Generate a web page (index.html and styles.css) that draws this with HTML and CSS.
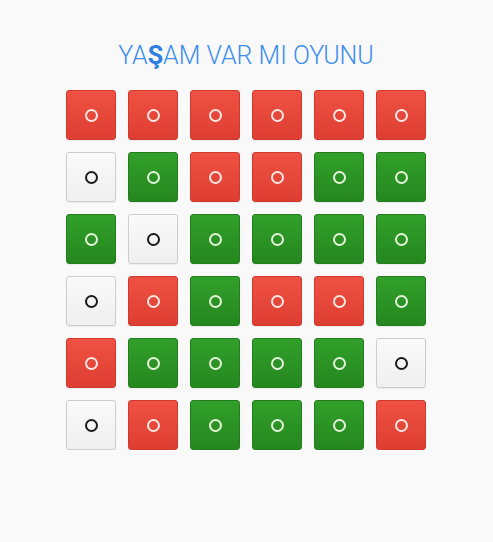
FILE: index.html
```html
<!DOCTYPE html>
<html lang="tr">
<head>
<meta charset="utf-8">
<title>Yaşam Var Mı Oyunu</title>
<link rel="stylesheet" href="styles.css">
</head>
<body>
<main class="page">
  <h1 class="title">YA<b class="title-accent">Ş</b>AM VAR MI OYUNU</h1>
  <div class="board">
    <button class="cell red"><span class="dot"></span></button>
    <button class="cell red"><span class="dot"></span></button>
    <button class="cell red"><span class="dot"></span></button>
    <button class="cell red"><span class="dot"></span></button>
    <button class="cell red"><span class="dot"></span></button>
    <button class="cell red"><span class="dot"></span></button>

    <button class="cell white"><span class="dot"></span></button>
    <button class="cell green"><span class="dot"></span></button>
    <button class="cell red"><span class="dot"></span></button>
    <button class="cell red"><span class="dot"></span></button>
    <button class="cell green"><span class="dot"></span></button>
    <button class="cell green"><span class="dot"></span></button>

    <button class="cell green"><span class="dot"></span></button>
    <button class="cell white"><span class="dot"></span></button>
    <button class="cell green"><span class="dot"></span></button>
    <button class="cell green"><span class="dot"></span></button>
    <button class="cell green"><span class="dot"></span></button>
    <button class="cell green"><span class="dot"></span></button>

    <button class="cell white"><span class="dot"></span></button>
    <button class="cell red"><span class="dot"></span></button>
    <button class="cell green"><span class="dot"></span></button>
    <button class="cell red"><span class="dot"></span></button>
    <button class="cell red"><span class="dot"></span></button>
    <button class="cell green"><span class="dot"></span></button>

    <button class="cell red"><span class="dot"></span></button>
    <button class="cell green"><span class="dot"></span></button>
    <button class="cell green"><span class="dot"></span></button>
    <button class="cell green"><span class="dot"></span></button>
    <button class="cell green"><span class="dot"></span></button>
    <button class="cell white"><span class="dot"></span></button>

    <button class="cell white"><span class="dot"></span></button>
    <button class="cell red"><span class="dot"></span></button>
    <button class="cell green"><span class="dot"></span></button>
    <button class="cell green"><span class="dot"></span></button>
    <button class="cell green"><span class="dot"></span></button>
    <button class="cell red"><span class="dot"></span></button>
  </div>
</main>
</body>
</html>
```
FILE: styles.css
```css
html, body {
  margin: 0;
  padding: 0;
  background: #f9f9f9;
}
body {
  font-family: Roboto, "Liberation Sans", sans-serif;
}
.page {
  display: flex;
  flex-direction: column;
  align-items: center;
  padding-top: 39px;
  padding-right: 1px;
}
.title {
  margin: 0 0 17px 0;
  font-weight: 300;
  font-size: 25px;
  line-height: 34px;
  color: #3d8ded;
  letter-spacing: 0;
}
.title-accent {
  font-weight: 700;
  color: #2f7fe0;
}
.board {
  display: grid;
  grid-template-columns: repeat(6, 50px);
  grid-auto-rows: 50px;
  gap: 12px;
}
.cell {
  width: 50px;
  height: 50px;
  margin: 0;
  padding: 0;
  border-radius: 3px;
  border: 1px solid;
  display: flex;
  align-items: center;
  justify-content: center;
  box-shadow: 0 1px 1px rgba(0,0,0,0.06);
}
.dot {
  width: 9px;
  height: 9px;
  border: 2px solid;
  border-radius: 50%;
  margin-top: 1px;
}
.red {
  background: linear-gradient(#ef5143, #dd3e31);
  border-color: #cf3a2e;
}
.red .dot { border-color: #fde8e4; }
.green {
  background: linear-gradient(#31a02a, #25871f);
  border-color: #237d1d;
}
.green .dot { border-color: #e4f3da; }
.white {
  background: linear-gradient(#fafafa, #efefef);
  border-color: #cdcdcd;
}
.white .dot { border-color: #1a1a1a; }
```
